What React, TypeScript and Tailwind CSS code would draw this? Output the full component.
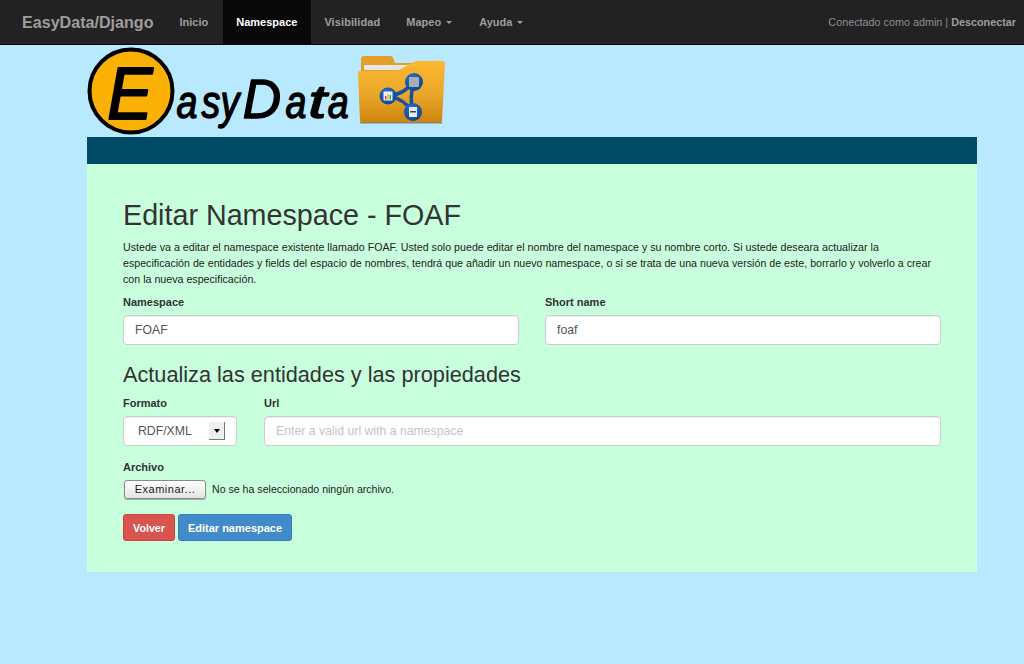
const sans = "font-['Liberation_Sans',Arial,sans-serif]";

function Caret() {
  return <span className="ml-[5px] inline-block align-middle w-0 h-0 border-x-[3.5px] border-x-transparent border-t-[3.5px] border-t-[#9d9d9d]" />;
}

function Logo() {
  return (
    <svg width="360" height="92" viewBox="0 0 360 92" className="block">
      <defs>
        <linearGradient id="folder" x1="0" y1="0" x2="0" y2="1">
          <stop offset="0" stopColor="#fdb92f" />
          <stop offset="0.55" stopColor="#eaa62a" />
          <stop offset="1" stopColor="#cc860e" />
        </linearGradient>
        <radialGradient id="node" cx="0.4" cy="0.3" r="0.8">
          <stop offset="0" stopColor="#2a6fd0" />
          <stop offset="1" stopColor="#0a3f8f" />
        </radialGradient>
      </defs>
      <circle cx="44" cy="46" r="41.5" fill="#fbb103" stroke="#000" strokeWidth="4" />
      <text transform="scale(0.92,1)" x="22" y="74" fontFamily="'Liberation Sans',sans-serif" fontStyle="italic" fontWeight="400" fontSize="74" stroke="#000" strokeWidth="2" strokeLinejoin="round" fill="#000">E</text>
      {/* asyData wordmark, letters placed one by one */}
      <g fontFamily="'Liberation Sans',sans-serif" fontStyle="italic" stroke="#000" strokeWidth="1.4" strokeLinejoin="round" fill="#000">
        <text transform="scale(0.8,1)" y="73" fontSize="47" x="112 143 167">asy</text>
        <text transform="scale(0.95,1)" y="73" fontSize="56" x="164">D</text>
        <text transform="scale(0.8,1)" y="73" fontSize="47" x="248">a</text>
        <text transform="scale(1.4,1)" y="73" fontSize="47" x="158">t</text>
        <text transform="scale(0.8,1)" y="73" fontSize="47" x="301">a</text>
      </g>
      {/* folder */}
      <path d="M274 24 V14 Q274 11 277 11 H303 Q306 11 307 15 L308 18 H330 V28 H274 Z" fill="#e39f27" />
      <rect x="277" y="20" width="49" height="5" fill="#e6e6e6" />
      <path d="M271 28 Q271 26 273 26 H310 L329 16 H356 Q358 16 358 18 L355 76 Q355 77 353 77 H275 Q273 77 273 76 Z" fill="url(#folder)" />
      <rect x="273" y="77" width="82" height="1.5" fill="#8f8168" />
      {/* share network badge */}
      <path d="M301 51 Q316 50 327 37 Q322 52 326 67 Q316 53 301 51 Z" fill="none" stroke="#1450a3" strokeWidth="3.5" />
      <circle cx="301" cy="51" r="8.5" fill="url(#node)" />
      <circle cx="327" cy="37" r="9" fill="url(#node)" />
      <circle cx="326" cy="67" r="9" fill="url(#node)" />
      <rect x="296.5" y="46.5" width="9" height="9" fill="#f3f3f0" />
      <rect x="298" y="51" width="1.4" height="3.5" fill="#d33" />
      <rect x="300.3" y="49" width="1.4" height="5.5" fill="#e6b422" />
      <rect x="302.6" y="50" width="1.4" height="4.5" fill="#3a3" />
      <rect x="322" y="32" width="10" height="10" rx="1" fill="#a9adb0" />
      <rect x="322" y="62" width="8" height="10" fill="#e9edf2" />
      <rect x="323" y="66" width="6" height="1.5" fill="#345" />
    </svg>
  );
}

const inputCls = "w-full h-[30px] bg-white border border-[#ccc] rounded-[4px] px-[11px] text-[12.25px] text-[#555] shadow-[inset_0_1px_1px_rgba(0,0,0,0.075)] flex items-center";

export default function App() {
  return (
    <div className={`${sans} min-h-[664px] bg-[#b8e9ff] text-[11px] leading-[16px] text-[#333]`}>
      <nav className="h-[45px] bg-[#222] border-b border-[#080808] flex items-stretch justify-between pl-[7px] pr-[8px] text-[11px] font-bold text-[#9d9d9d]">
        <div className="flex items-stretch">
          <a className="pl-[15px] pr-[12px] flex items-center text-[16.1px] font-bold text-[#9d9d9d]">EasyData/Django</a>
          <a className="pl-[14px] pr-[15px] flex items-center">Inicio</a>
          <a className="pl-[13px] pr-[14px] flex items-center bg-[#080808] text-white">Namespace</a>
          <a className="pl-[13px] pr-[12px] flex items-center tracking-[0.1px]">Visibilidad</a>
          <a className="px-[14px] flex items-center">Mapeo <Caret /></a>
          <a className="px-[13px] flex items-center">Ayuda <Caret /></a>
        </div>
        <div className="flex items-center font-normal text-[10.8px] text-[#8a9199]">
          <span>Conectado como admin | <b className="font-bold text-[#9d9d9d]">Desconectar</b></span>
        </div>
      </nav>

      <div className="mx-[87px] w-[890px]">
        <Logo />
        <div className="h-[27px] bg-[#004a66]" />
        <div className="h-[408px] bg-[#c8ffdc] px-[36px] pt-[32px] text-[#222]">
          <h1 className="text-[28.7px] leading-[38px] font-normal text-[#333]">Editar Namespace - FOAF</h1>
          <p className="mt-[5px] text-[10.67px] leading-[16px] w-[818px]">
            Ustede va a editar el namespace existente llamado FOAF. Usted solo puede editar el nombre del namespace y su nombre corto. Si ustede deseara actualizar la especificación de entidades y fields del espacio de nombres, tendrá que añadir un nuevo namespace, o si se trata de una nueva versión de este, borrarlo y volverlo a crear con la nueva especificación.
          </p>

          <div className="mt-[7px] grid grid-cols-[396px_396px] gap-x-[26px]">
            <div>
              <label className="block font-bold text-[11px] text-[#333] mb-[5px]">Namespace</label>
              <div className={inputCls}>FOAF</div>
            </div>
            <div>
              <label className="block font-bold text-[11px] text-[#333] mb-[5px]">Short name</label>
              <div className={inputCls}>foaf</div>
            </div>
          </div>

          <h2 className="mt-[16px] text-[21.7px] leading-[28px] font-normal text-[#333]">Actualiza las entidades y las propiedades</h2>

          <div className="mt-[6px] flex gap-[27px]">
            <div className="w-[114px]">
              <label className="block font-bold text-[11px] text-[#333] mb-[5px]">Formato</label>
              <div className={`${inputCls} justify-between !pl-[14px] !pr-[11px]`}>
                <span>RDF/XML</span>
                <span className="w-[16px] h-[18px] bg-[#efefef] border-r border-b border-[#777] flex items-center justify-center">
                  <span className="w-0 h-0 border-x-[3px] border-x-transparent border-t-[4px] border-t-black" />
                </span>
              </div>
            </div>
            <div className="w-[677px]">
              <label className="block font-bold text-[11px] text-[#333] mb-[5px]">Url</label>
              <div className={`${inputCls} !text-[#c4c4c4]`}>Enter a valid url with a namespace</div>
            </div>
          </div>

          <label className="block mt-[13px] font-bold text-[11px] text-[#333] mb-[4px]">Archivo</label>
          <div className="flex items-center h-[20px]">
            <button className="ml-[1px] h-[19px] w-[82px] rounded-[3px] border border-[#8a8a8a] bg-gradient-to-b from-white to-[#e4e4e4] text-[11px] tracking-[0.5px] text-[#222] shadow-[0_1px_1px_rgba(0,0,0,0.3)]">Examinar...</button>
            <span className="ml-[6px] text-[10.6px]">No se ha seleccionado ningún archivo.</span>
          </div>

          <div className="mt-[15px] flex gap-[3px]">
            <button className="h-[27px] w-[52px] rounded-[3px] bg-[#d9534f] border border-[#d43f3a] text-white font-bold text-[10.67px]">Volver</button>
            <button className="h-[27px] w-[114px] rounded-[3px] bg-[#428bca] border border-[#357ebd] text-white font-bold text-[11px]">Editar namespace</button>
          </div>
        </div>
      </div>
    </div>
  );
}
